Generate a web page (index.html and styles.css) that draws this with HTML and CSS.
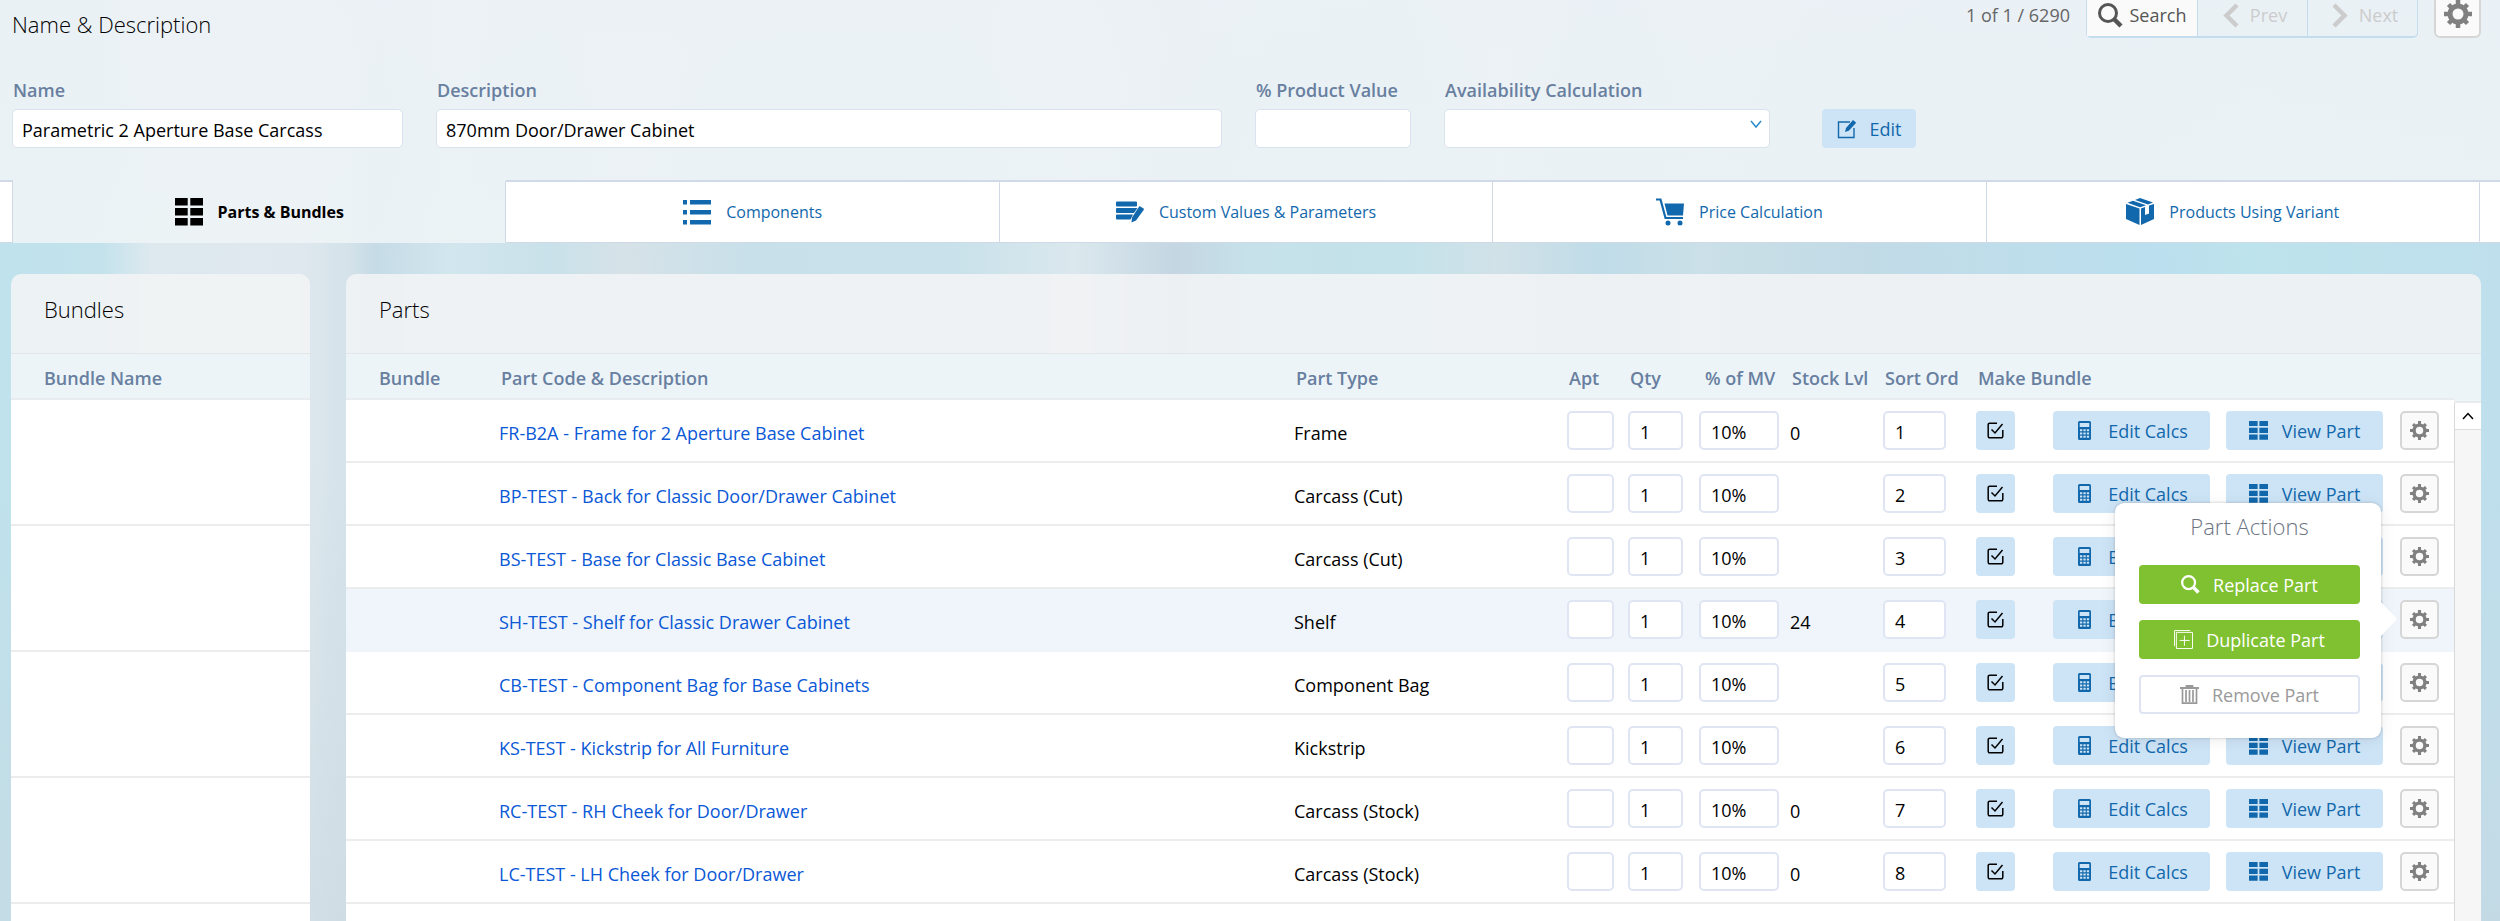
FILE: index.html
```
<!DOCTYPE html>
<html lang="en">
<head>
  <meta charset="UTF-8">
  <meta name="viewport" content="width=device-width, initial-scale=1.0">
  <title>Parametric 2 Aperture Base Carcass</title>
  <link rel="stylesheet" href="styles.css">
</head>
<body>

  <!-- icon set -->
  <svg class="icon-set" aria-hidden="true">
    <symbol id="i-search" viewBox="0 0 25 25">
      <circle cx="10" cy="10" r="8.5" fill="none" stroke="currentColor" stroke-width="3"/>
      <path d="M15.5 15.5L23 23" stroke="currentColor" stroke-width="4.5"/>
    </symbol>
    <symbol id="i-left" viewBox="0 0 25 25">
      <path d="M19 2L8.500 12.500L19 23" fill="none" stroke="currentColor" stroke-width="4.5"/>
    </symbol>
    <symbol id="i-right" viewBox="0 0 25 25">
      <path d="M7 2L17.500 12.500L7 23" fill="none" stroke="currentColor" stroke-width="4.5"/>
    </symbol>
    <symbol id="i-gear" viewBox="0 0 28 28">
      <circle cx="14" cy="14" r="8" fill="none" stroke="currentColor" stroke-width="5"/>
      <path d="M14 0v5M14 23v5M0 14h5M23 14h5M4.500 4.500l3.500 3.500M20 20l3.500 3.500M4.500 23.500l3.500-3.500M20 8l3.500-3.500" stroke="currentColor" stroke-width="4.5"/>
    </symbol>
    <symbol id="i-grid" viewBox="0 0 28 28">
      <path d="M0 0h12.700v7.500H0zM15.300 0H28v7.500H15.300zM0 10h12.700v7.500H0zM15.300 10H28v7.500H15.300zM0 20h12.700v7.500H0zM15.300 20H28v7.500H15.300z" fill="currentColor"/>
    </symbol>
    <symbol id="i-list" viewBox="0 0 28 28">
      <path d="M0 2h4v4.500H0zM7 2h21v4.500H7zM0 12h4v4.500H0zM7 12h21v4.500H7zM0 22h4v4.500H0zM7 22h21v4.500H7z" fill="currentColor"/>
    </symbol>
    <symbol id="i-values" viewBox="0 0 28 28">
      <path d="M1 3.500h19a1 1 0 0 1 1 1v3a1 1 0 0 1-1 1H1a1 1 0 0 1-1-1v-3a1 1 0 0 1 1-1zM1 10h20.500L18 15H1a1 1 0 0 1-1-1v-3a1 1 0 0 1 1-1zM1 16.500h16l-2.500 5H1a1 1 0 0 1-1-1v-3a1 1 0 0 1 1-1z" fill="currentColor"/>
      <path d="M23.500 8l4 2.500a1 1 0 0 1 .3 1.200L20 22.500l-4.500 2 .5-5z" fill="currentColor"/>
    </symbol>
    <symbol id="i-cart" viewBox="0 0 28 28">
      <path d="M0 1.500h4.500L9.500 20H27" fill="none" stroke="currentColor" stroke-width="2.200"/>
      <path d="M8.500 5.500H28l-1 12H11.500z" fill="currentColor"/>
      <circle cx="12" cy="25" r="2.500" fill="currentColor"/>
      <circle cx="24" cy="25" r="2.500" fill="currentColor"/>
    </symbol>
    <symbol id="i-box" viewBox="0 0 28 28">
      <path d="M0 6l13.500 4.500V27L0 21zM15 10.500l4-1.500v8l4-1.500V7.500L28 6v15l-13 6z" fill="currentColor"/>
      <path d="M1.500 4.800L7 2.700l13 4.500-6 2zM9 2l5-2 13 4.500-5 2z" fill="currentColor"/>
    </symbol>
    <symbol id="i-edit" viewBox="0 0 20 20">
      <path d="M13 3H1.500v15.500H17V9" fill="none" stroke="currentColor" stroke-width="1.400"/>
      <path d="M8 13l1-4 7-8 3.200 2.700-7.400 8z" fill="currentColor"/>
    </symbol>
    <symbol id="i-check" viewBox="0 0 17 17">
      <path d="M10 1.200H2.700a1.500 1.500 0 0 0-1.500 1.500v11.600a1.500 1.500 0 0 0 1.500 1.500h11.600a1.500 1.500 0 0 0 1.500-1.500V8" fill="none" stroke="currentColor" stroke-width="1.500"/>
      <path d="M4.500 7.500L8 11l7.500-9" fill="none" stroke="currentColor" stroke-width="1.500"/>
    </symbol>
    <symbol id="i-calc" viewBox="0 0 19 19">
      <path fill-rule="evenodd" d="M4.500 0h10A1.500 1.500 0 0 1 16 1.500v16a1.500 1.500 0 0 1-1.500 1.500h-10A1.500 1.500 0 0 1 3 17.500v-16A1.500 1.500 0 0 1 4.500 0zM4.700 2v4h9.600V2zM5 8.200v2h2.300v-2zM8.400 8.200v2h2.300v-2zM11.800 8.200v2h2.300v-2zM5 11.500v2h2.300v-2zM8.400 11.500v2h2.300v-2zM11.800 11.500v2h2.300v-2zM5 14.800v2h2.300v-2zM8.400 14.800v2h2.300v-2zM11.800 14.800v2h2.300v-2z" fill="currentColor"/>
    </symbol>
    <symbol id="i-duplicate" viewBox="0 0 20 20">
      <path d="M.5 17V.5H17M2.500 2.500h17v17h-17zM11 6v10.500M6 11h10.500" fill="none" stroke="currentColor"/>
    </symbol>
    <symbol id="i-trash" viewBox="0 0 19 19">
      <path d="M0 3h19M6.500 3V1h6v2" fill="none" stroke="currentColor" stroke-width="1.800"/>
      <path d="M2.500 4v14.200h14V4M6 5v12M9.500 5v12M13 5v12" fill="none" stroke="currentColor" stroke-width="1.700"/>
    </symbol>
    <symbol id="i-down" viewBox="0 0 12 12">
      <path d="M1 3l5 6 5-6" fill="none" stroke="currentColor" stroke-width="1.500"/>
    </symbol>
    <symbol id="i-up" viewBox="0 0 12 12">
      <path d="M1 9l5-5.500L11 9" fill="none" stroke="currentColor" stroke-width="1.500"/>
    </symbol>
  </svg>

  <header class="page-header">
    <div class="top-bar">
      <h1>Name &amp; Description</h1>
      <div class="record-nav">
        <span class="record-count">1 of 1 / 6290</span>
        <div class="pager">
          <button class="pager-btn"><svg><use href="#i-search"/></svg>Search</button>
          <button class="pager-btn" disabled><svg><use href="#i-left"/></svg>Prev</button>
          <button class="pager-btn" disabled><svg><use href="#i-right"/></svg>Next</button>
        </div>
        <button class="settings-btn" aria-label="Settings"><svg><use href="#i-gear"/></svg></button>
      </div>
    </div>

    <form class="fields">
      <div class="field">
        <label for="name">Name</label>
        <input id="name" type="text" value="Parametric 2 Aperture Base Carcass">
      </div>
      <div class="field">
        <label for="description">Description</label>
        <input id="description" type="text" value="870mm Door/Drawer Cabinet">
      </div>
      <div class="field">
        <label for="product-value">% Product Value</label>
        <input id="product-value" type="text">
      </div>
      <div class="field">
        <label for="availability">Availability Calculation</label>
        <div class="select-wrap">
          <select id="availability"><option></option></select>
          <svg><use href="#i-down"/></svg>
        </div>
      </div>
      <button type="button" class="btn edit-btn"><svg><use href="#i-edit"/></svg>Edit</button>
    </form>

    <nav class="tabs">
      <a href="#parts" class="tab active"><svg><use href="#i-grid"/></svg>Parts &amp; Bundles</a>
      <a href="#components" class="tab"><svg><use href="#i-list"/></svg>Components</a>
      <a href="#values" class="tab"><svg><use href="#i-values"/></svg>Custom Values &amp; Parameters</a>
      <a href="#price" class="tab"><svg><use href="#i-cart"/></svg>Price Calculation</a>
      <a href="#products" class="tab"><svg><use href="#i-box"/></svg>Products Using Variant</a>
    </nav>
  </header>

  <main>
    <section class="card bundles">
      <h2>Bundles</h2>
      <div class="bundle-body">
        <table class="bundle-table">
          <thead><tr><th>Bundle Name</th></tr></thead>
          <tbody>
            <tr><td></td></tr>
            <tr><td></td></tr>
            <tr><td></td></tr>
            <tr><td></td></tr>
          </tbody>
        </table>
      </div>
    </section>

    <section class="card parts" id="parts">
      <h2>Parts</h2>
      <div class="parts-body">
        <div class="table-wrap">
          <table class="parts-table">
            <colgroup>
              <col class="c-bundle"><col class="c-desc"><col class="c-type"><col class="c-apt">
              <col class="c-qty"><col class="c-mv"><col class="c-stock"><col class="c-sort">
              <col class="c-make"><col class="c-calcs"><col class="c-view"><col class="c-menu">
            </colgroup>
            <thead>
              <tr>
                <th>Bundle</th>
                <th>Part Code &amp; Description</th>
                <th>Part Type</th>
                <th>Apt</th>
                <th>Qty</th>
                <th class="mv">% of MV</th>
                <th>Stock Lvl</th>
                <th>Sort Ord</th>
                <th colspan="2">Make Bundle</th>
                <th></th>
                <th></th>
              </tr>
            </thead>
            <tbody id="part-rows"></tbody>
          </table>
        </div>
        <div class="scroll-track">
          <button aria-label="Scroll up"><svg><use href="#i-up"/></svg></button>
        </div>
      </div>
    </section>
  </main>

  <template id="part-menu">
    <div class="part-menu">
      <h3>Part Actions</h3>
      <button class="action green"><svg><use href="#i-search"/></svg>Replace Part</button>
      <button class="action green"><svg><use href="#i-duplicate"/></svg>Duplicate Part</button>
      <button class="action"><svg><use href="#i-trash"/></svg>Remove Part</button>
    </div>
  </template>

  <script>
    const parts = [
      { name: "FR-B2A - Frame for 2 Aperture Base Cabinet", type: "Frame", stock: "0" },
      { name: "BP-TEST - Back for Classic Door/Drawer Cabinet", type: "Carcass (Cut)", stock: "" },
      { name: "BS-TEST - Base for Classic Base Cabinet", type: "Carcass (Cut)", stock: "" },
      { name: "SH-TEST - Shelf for Classic Drawer Cabinet", type: "Shelf", stock: "24", open: true },
      { name: "CB-TEST - Component Bag for Base Cabinets", type: "Component Bag", stock: "" },
      { name: "KS-TEST - Kickstrip for All Furniture", type: "Kickstrip", stock: "" },
      { name: "RC-TEST - RH Cheek for Door/Drawer", type: "Carcass (Stock)", stock: "0" },
      { name: "LC-TEST - LH Cheek for Door/Drawer", type: "Carcass (Stock)", stock: "0" },
    ];

    const icon = (id) => `<svg><use href="#i-${id}"/></svg>`;

    document.getElementById("part-rows").innerHTML = parts.map((part, i) => `
      <tr class="${part.open ? "selected" : ""}">
        <td></td>
        <td class="text"><a href="#part-${i + 1}">${part.name}</a></td>
        <td class="text">${part.type}</td>
        <td><input class="apt" type="text" aria-label="Apt"></td>
        <td><input class="qty" type="text" aria-label="Qty" value="1"></td>
        <td><input class="pct" type="text" aria-label="% of MV" value="10%"></td>
        <td class="text">${part.stock}</td>
        <td><input class="sort" type="text" aria-label="Sort Ord" value="${i + 1}"></td>
        <td><button class="btn check-btn" aria-label="Make Bundle">${icon("check")}</button></td>
        <td><button class="btn row-btn">${icon("calc")}Edit Calcs</button></td>
        <td><button class="btn row-btn">${icon("grid")}View Part</button></td>
        <td><div class="menu-wrap"><button class="menu-btn" aria-label="Part Actions">${icon("gear")}</button></div></td>
      </tr>`).join("");

    // open the actions menu on the selected row
    const menu = document.getElementById("part-menu").content.cloneNode(true);
    document.querySelector(".selected .menu-wrap").appendChild(menu);
  </script>

</body>
</html>
```
FILE: styles.css
```
* {
  box-sizing: border-box;
}

body {
  margin: 0;
  min-height: 100vh;
  display: flex;
  flex-direction: column;
  font-family: "Open Sans", "Noto Sans", sans-serif;
  font-size: 18px;
  line-height: 24px;
  color: #000;
  background:
    linear-gradient(180deg, rgba(200, 214, 222, 0) 50%, rgba(200, 214, 222, 0.5) 100%),
    linear-gradient(90deg, #bfe2ec 0%, #c3e2ec 4%, #dde9ef 6%, #dfe8ee 12%, #d4e2ea 14%, #c5dbe6 15%, #d2e6ee 18%, #c9e1ea 22%, #d6e2e8 25%, #c8e0ea 30%, #c8e1ea 38%, #dbe8ee 43%, #c4d6e2 47%, #c6e1ea 50%, #c3e2ea 56%, #d1e1e8 60%, #bfdce8 64%, #cbe0e8 68%, #c2dbe6 74%, #bbdfee 86%, #bde3ec 90%, #bfdfed 100%);
}

button,
input,
select {
  font: inherit;
  color: inherit;
  margin: 0;
}

button {
  cursor: pointer;
  padding: 0;
}

svg {
  display: block;
  flex: none;
}

.icon-set {
  position: absolute;
  width: 0;
  height: 0;
}

h1,
h2,
h3 {
  margin: 0;
  font-size: 22px;
  font-weight: 300;
  line-height: 30px;
}

/* header */
.page-header {
  background: linear-gradient(180deg, rgba(237, 242, 246, 0.94), rgba(238, 244, 246, 0.9));
}

.top-bar {
  display: flex;
  justify-content: space-between;
  align-items: flex-start;
  height: 78px;
  padding: 0 19px 0 12px;
}

.top-bar h1 {
  padding-top: 9px;
}

.record-nav {
  display: flex;
}

.record-count {
  padding-top: 3px;
  margin-right: 16px;
  color: #666;
}

.pager {
  display: flex;
  height: 38px;
  margin-right: 16px;
  border: 1px solid #c3ddef;
  border-width: 0 1px 2px;
  border-radius: 0 0 5px 5px;
}

.pager-btn {
  display: flex;
  justify-content: center;
  width: 110px;
  gap: 7px;
  padding-top: 3px;
  border: 0;
  background: #fafafa;
  color: #555;
}

.pager-btn + .pager-btn {
  border-left: 1px solid #c3ddef;
}

.pager-btn:disabled {
  background: none;
  color: #ccc;
}

.pager-btn svg {
  width: 25px;
  height: 25px;
}

.settings-btn {
  display: flex;
  justify-content: center;
  width: 47px;
  height: 38px;
  border: 2px solid #d6d6d6;
  border-top: 0;
  border-radius: 0 0 6px 6px;
  background: #fafafa;
  color: #808080;
}

.settings-btn svg {
  width: 28px;
  height: 28px;
}

.fields {
  display: grid;
  grid-template-columns: 391fr 786fr 156px 326fr 113px 531fr;
  gap: 33px;
  align-items: end;
  padding: 0 20px 32px 12px;
}

.field label {
  display: block;
  margin-bottom: 7px;
  padding-left: 1px;
  font-weight: 600;
  color: #687fa0;
}

input,
select {
  display: block;
  width: 100%;
  height: 39px;
  padding: 2px 9px 0;
  border: 1px solid #dae2f0;
  border-radius: 5px;
  background: #fff;
}

.select-wrap {
  position: relative;
}

.select-wrap select {
  appearance: none;
}

.select-wrap svg {
  position: absolute;
  top: 9px;
  right: 8px;
  width: 12px;
  height: 12px;
  color: #2b8ccb;
}

.btn {
  display: flex;
  align-items: center;
  justify-content: center;
  height: 39px;
  border: 0;
  border-radius: 4px;
  background: #cde4f6;
  color: #1268ac;
  font-weight: 500;
}

.edit-btn {
  justify-self: end;
  width: 94px;
  gap: 13px;
}

.edit-btn svg {
  width: 20px;
  height: 20px;
}

/* tabs */
.tabs {
  display: flex;
  height: 63px;
}

.tabs::before,
.tabs::after {
  content: "";
  width: 12px;
  background: #fff;
  border: solid #d0d9e6;
  border-width: 2px 1px 1px 0;
}

.tabs::after {
  width: 20px;
  border-width: 2px 0 1px;
}

.tab {
  flex: 1;
  display: flex;
  align-items: center;
  justify-content: center;
  gap: 15px;
  border: solid #d0d9e6;
  border-width: 2px 1px 1px 0;
  background: #fff;
  color: #1268ac;
  font-size: 16px;
  font-weight: 500;
  text-decoration: none;
}

.tab.active {
  background: none;
  border-color: transparent #d0d9e6 transparent transparent;
  color: #000;
  font-weight: 700;
}

.tab svg {
  width: 28px;
  height: 28px;
}

/* cards */
main {
  flex: 1;
  display: flex;
  gap: 36px;
  padding: 31px 19px 0 11px;
}

.card {
  display: flex;
  flex-direction: column;
  border-radius: 10px 10px 0 0;
  background: rgba(242, 244, 245, 0.88);
}

.card h2 {
  height: 79px;
  padding: 20px 33px 0;
}

.bundles {
  width: 299px;
  flex: none;
}

.parts {
  flex: 1;
}

.bundle-body {
  flex: 1;
  background: #fff;
}

.parts-body {
  flex: 1;
  display: flex;
}

.table-wrap {
  flex: 1;
  background: #fff;
}

table {
  width: 100%;
  border-collapse: separate;
  border-spacing: 0;
  table-layout: fixed;
}

th {
  height: 47px;
  padding: 3px 0 0 2px;
  border-top: 1px solid #e4e7e9;
  border-bottom: 2px solid #e9ecee;
  background: #ecf4f8;
  color: #687fa0;
  font-weight: 600;
  text-align: left;
  white-space: nowrap;
}

th:first-child {
  padding-left: 33px;
}

th.mv {
  padding-left: 6px;
}

td {
  height: 63px;
  padding: 0;
  border-bottom: 2px solid #ececec;
}

td.text {
  padding-top: 4px;
}

.bundle-table td {
  height: 126px;
}

.c-bundle { width: 153px; }
.c-type { width: 273px; }
.c-apt { width: 61px; }
.c-qty { width: 71px; }
.c-mv { width: 91px; }
.c-stock { width: 93px; }
.c-sort { width: 93px; }
.c-make { width: 77px; }
.c-calcs { width: 173px; }
.c-view { width: 174px; }
.c-menu { width: 54px; }

td a {
  color: #0a58d6;
  text-decoration: none;
}

.selected td {
  background: #eff5fa;
  border-color: #eff5fa;
}

td input {
  border-width: 2px;
  border-color: #dfe5f3;
  padding: 2px 10px 0;
}

.apt { width: 47px; }
.qty { width: 55px; }
.pct { width: 80px; }
.sort { width: 63px; }

.check-btn {
  width: 39px;
  color: #000;
}

.check-btn svg {
  width: 17px;
  height: 17px;
}

.row-btn {
  width: 157px;
  gap: 14px;
}

.row-btn svg {
  width: 19px;
  height: 19px;
}

.menu-wrap {
  position: relative;
  width: 39px;
}

.menu-btn {
  display: flex;
  align-items: center;
  justify-content: center;
  width: 39px;
  height: 39px;
  border: 2px solid #d6d6d6;
  border-radius: 5px;
  background: #fafafa;
  color: #808080;
}

.menu-btn svg {
  width: 19px;
  height: 19px;
}

/* part actions popup */
.part-menu {
  position: absolute;
  z-index: 1;
  top: -97px;
  right: 58px;
  width: 266px;
  height: 235px;
  display: flex;
  flex-direction: column;
  gap: 16px;
  padding: 8px 21px 0 24px;
  border-radius: 9px;
  background: #fff;
  box-shadow: 0 0 3px rgba(0, 0, 0, 0.2), 0 2px 16px rgba(0, 0, 0, 0.08);
}

.part-menu::after {
  content: "";
  position: absolute;
  top: 99px;
  left: 100%;
  border: solid transparent;
  border-width: 17px 0 17px 16px;
  border-left-color: #fff;
}

.part-menu h3 {
  margin-bottom: 8px;
  color: #6c7482;
  text-align: center;
}

.action {
  display: flex;
  align-items: center;
  justify-content: center;
  gap: 13px;
  height: 39px;
  border: 2px solid #dfe5f3;
  border-radius: 4px;
  background: #fff;
  color: #999;
}

.action.green {
  border: 0;
  background: #80c132;
  color: #fff;
  font-weight: 500;
}

.action svg {
  width: 19px;
  height: 19px;
}

/* scrollbar */
.scroll-track {
  width: 27px;
  background: #f6f6f6;
  border-left: 1px solid #d8d8d8;
}

.scroll-track::before {
  content: "";
  display: block;
  height: 47px;
  margin-left: -1px;
  background: #ecf4f8;
  border-top: 1px solid #e4e7e9;
  border-bottom: 2px solid #e9ecee;
}

.scroll-track button {
  display: flex;
  align-items: center;
  justify-content: center;
  width: 100%;
  height: 27px;
  border: 0;
  border-bottom: 1px solid #ddd;
  background: #fff;
}

.scroll-track svg {
  width: 12px;
  height: 12px;
}
```
